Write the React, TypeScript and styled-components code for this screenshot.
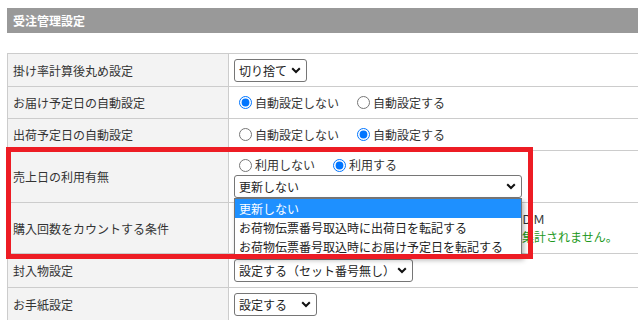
import React, { FC } from "react";
import styled, { createGlobalStyle } from "styled-components";

const GlobalStyle = createGlobalStyle`
  html, body {
    margin: 0;
    padding: 0;
    background: #fff;
    overflow: hidden;
  }
  body {
    font-family: "Noto Sans CJK JP", "Noto Sans", sans-serif;
    font-size: 12px;
    color: #333;
  }
`;

const Page = styled.div`
  position: relative;
  width: 638px;
  height: 320px;
  overflow: hidden;
  padding: 8px 0 0 7px;
  box-sizing: border-box;
`;

const SectionTitle = styled.div`
  width: 700px;
  height: 25px;
  padding-left: 6px;
  box-sizing: border-box;
  background: #999;
  color: #fff;
  font-size: 12px;
  font-weight: bold;
  line-height: 25px;
`;

const Table = styled.div`
  width: 700px;
  margin-top: 20px;
  border-top: 1px solid #ccc;
  border-left: 1px solid #ccc;
`;

const Row = styled.div<{ $h: number }>`
  display: grid;
  grid-template-columns: 221px 1fr;
  height: ${(p) => p.$h}px;
  border-bottom: 1px solid #ccc;
  box-sizing: border-box;
`;

const Label = styled.div`
  display: flex;
  align-items: center;
  padding-left: 5px;
  border-right: 1px solid #ccc;
  background: #f3f3f3;
  color: #333;
`;

const Value = styled.div<{ $top?: boolean }>`
  display: flex;
  flex-direction: column;
  justify-content: ${(p) => (p.$top ? "flex-start" : "center")};
  align-items: flex-start;
  padding: ${(p) => (p.$top ? "5px 0 0 5px" : "0 0 0 5px")};
`;

const Line = styled.div`
  display: flex;
  align-items: center;
  height: 18px;
  line-height: 18px;
  white-space: nowrap;
`;

const Choice = styled.label`
  display: flex;
  align-items: center;
  color: #333;
  & + & {
    margin-left: 13px;
  }
`;

const Radio = styled.input.attrs({ type: "radio" })`
  width: 13px;
  height: 13px;
  margin: 0 3px 0 5px;
  accent-color: #0075ff;
`;

const Check = styled.input.attrs({ type: "checkbox" })`
  width: 13px;
  height: 13px;
  margin: 0 3px 0 4px;
`;

const Note = styled.div`
  height: 18px;
  line-height: 18px;
  color: #229922;
  white-space: nowrap;
`;

const SelectWrap = styled.div<{ $gap?: number }>`
  position: relative;
  margin-top: ${(p) => p.$gap ?? 0}px;
`;

const SelectBox = styled.div<{ $w: number }>`
  display: flex;
  align-items: center;
  justify-content: space-between;
  width: ${(p) => p.$w}px;
  height: 23px;
  padding: 0 5px 0 4px;
  box-sizing: border-box;
  border: 1px solid #767676;
  border-radius: 3px;
  background: #fff;
  color: #222;
  white-space: nowrap;
`;

const OptionList = styled.ul`
  position: absolute;
  left: 0;
  top: 100%;
  z-index: 2;
  width: 100%;
  margin: 0;
  padding: 0;
  list-style: none;
  box-sizing: border-box;
  border: 1px solid #767676;
  background: #fff;
  box-shadow: 2px 3px 5px rgba(0, 0, 0, 0.3);
`;

const Option = styled.li<{ $active?: boolean }>`
  height: 19px;
  line-height: 19px;
  padding-left: 4px;
  background: ${(p) => (p.$active ? "#1e90ff" : "#fff")};
  color: ${(p) => (p.$active ? "#fff" : "#222")};
  white-space: nowrap;
`;

const Highlight = styled.div`
  position: absolute;
  left: 6px;
  top: 147px;
  z-index: 3;
  width: 527px;
  height: 112px;
  box-sizing: border-box;
  border: 5px solid #ed1c24;
  pointer-events: none;
`;

const Chevron: FC = () => (
  <svg width="10" height="7" viewBox="0 0 10 7">
    <path d="M1.2 1.2 L5 5 L8.8 1.2" fill="none" stroke="#111" strokeWidth="2" />
  </svg>
);

const Select: FC<{ value: string; width: number; options?: string[]; gap?: number }> = ({
  value,
  width,
  options,
  gap,
}) => (
  <SelectWrap $gap={gap}>
    <SelectBox $w={width}>
      <span>{value}</span>
      <Chevron />
    </SelectBox>
    {options && (
      <OptionList>
        {options.map((o) => (
          <Option key={o} $active={o === value}>
            {o}
          </Option>
        ))}
      </OptionList>
    )}
  </SelectWrap>
);

const RadioPair: FC<{ name: string; a: string; b: string; checked: "a" | "b" }> = ({ name, a, b, checked }) => (
  <Line>
    <Choice>
      <Radio name={name} defaultChecked={checked === "a"} />
      {a}
    </Choice>
    <Choice>
      <Radio name={name} defaultChecked={checked === "b"} />
      {b}
    </Choice>
  </Line>
);

export default function App() {
  return (
    <Page>
      <GlobalStyle />
      <SectionTitle>受注管理設定</SectionTitle>

      <Table>
        <Row $h={33}>
          <Label>掛け率計算後丸め設定</Label>
          <Value>
            <Select value="切り捨て" width={73} />
          </Value>
        </Row>

        <Row $h={32}>
          <Label>お届け予定日の自動設定</Label>
          <Value>
            <RadioPair name="delivery" a="自動設定しない" b="自動設定する" checked="a" />
          </Value>
        </Row>

        <Row $h={32}>
          <Label>出荷予定日の自動設定</Label>
          <Value>
            <RadioPair name="shipping" a="自動設定しない" b="自動設定する" checked="b" />
          </Value>
        </Row>

        <Row $h={52}>
          <Label>売上日の利用有無</Label>
          <Value $top>
            <RadioPair name="sales" a="利用しない" b="利用する" checked="b" />
            <Select
              value="更新しない"
              width={288}
              gap={1}
              options={["更新しない", "お荷物伝票番号取込時に出荷日を転記する", "お荷物伝票番号取込時にお届け予定日を転記する"]}
            />
          </Value>
        </Row>

        <Row $h={51}>
          <Label>購入回数をカウントする条件</Label>
          <Value>
            <Line>
              <Choice>
                <Check defaultChecked />
                通常受注
              </Choice>
              <Choice>
                <Check defaultChecked />
                定期受注
              </Choice>
              <Choice>
                <Check defaultChecked />
                頒布会・予約
              </Choice>
              <Choice>
                <Check />
                ＤＭ
              </Choice>
            </Line>
            <Note>※チェックを外した受注区分の注文は、購入回数には集計されません。</Note>
          </Value>
        </Row>

        <Row $h={34}>
          <Label>封入物設定</Label>
          <Value>
            <Select value="設定する（セット番号無し）" width={179} />
          </Value>
        </Row>

        <Row $h={34}>
          <Label>お手紙設定</Label>
          <Value>
            <Select value="設定する" width={83} />
          </Value>
        </Row>
      </Table>

      <Highlight />
    </Page>
  );
}
